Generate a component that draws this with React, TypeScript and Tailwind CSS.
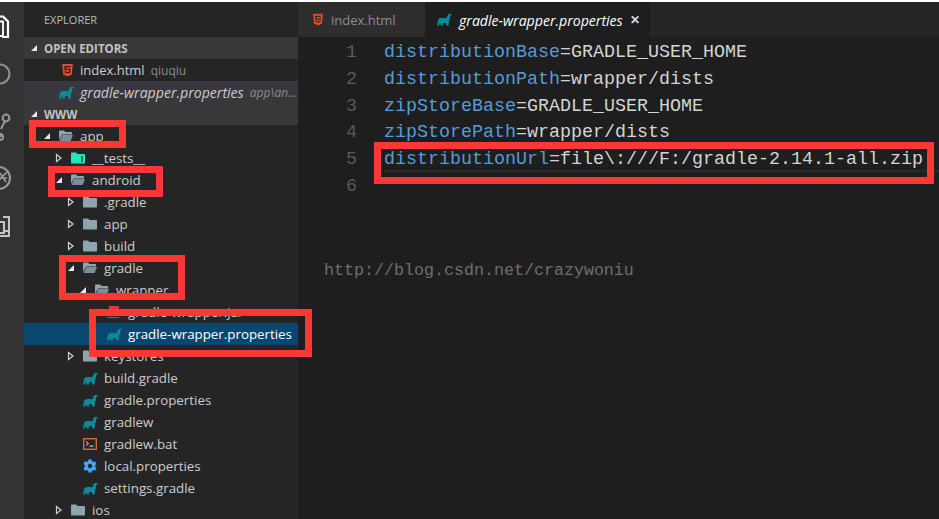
import React from "react";
import { FaCog, FaHtml5 } from "react-icons/fa";

const uiFont = "font-['Open_Sans','Liberation_Sans',sans-serif]";
const monoFont = "font-['Liberation_Mono',monospace]";

type Kind = "open" | "closed" | "tests" | "gradle" | "jar" | "bat" | "gear";

interface TreeRow {
  name: string;
  depth: number;
  kind: Kind;
  selected?: boolean;
}

const rows: TreeRow[] = [
  { name: "app", depth: 0, kind: "open" },
  { name: "__tests__", depth: 1, kind: "tests" },
  { name: "android", depth: 1, kind: "open" },
  { name: ".gradle", depth: 2, kind: "closed" },
  { name: "app", depth: 2, kind: "closed" },
  { name: "build", depth: 2, kind: "closed" },
  { name: "gradle", depth: 2, kind: "open" },
  { name: "wrapper", depth: 3, kind: "open" },
  { name: "gradle-wrapper.jar", depth: 4, kind: "jar" },
  { name: "gradle-wrapper.properties", depth: 4, kind: "gradle", selected: true },
  { name: "keystores", depth: 2, kind: "closed" },
  { name: "build.gradle", depth: 2, kind: "gradle" },
  { name: "gradle.properties", depth: 2, kind: "gradle" },
  { name: "gradlew", depth: 2, kind: "gradle" },
  { name: "gradlew.bat", depth: 2, kind: "bat" },
  { name: "local.properties", depth: 2, kind: "gear" },
  { name: "settings.gradle", depth: 2, kind: "gradle" },
  { name: "ios", depth: 1, kind: "closed" },
];

const code = [
  ["distributionBase", "=GRADLE_USER_HOME"],
  ["distributionPath", "=wrapper/dists"],
  ["zipStoreBase", "=GRADLE_USER_HOME"],
  ["zipStorePath", "=wrapper/dists"],
  ["distributionUrl", "=file\\:///F:/gradle-2.14.1-all.zip"],
  ["", ""],
];

function Elephant() {
  return (
    <svg viewBox="0 0 15 13" className="w-[15px] h-[13px] shrink-0" fill="#0b8a9a">
      <path d="M0 12.5 L1 7 C1.5 5.5 3 5 5 5 C7 5 8 5.5 9.5 5 C10 3 11 1 12.5 .8 C13.5 .7 15 1 14.6 2.2 L13.3 2.6 C13 4.5 13 7 12 8.2 L11.6 12.5 L9.4 12.5 L9 10 L6 10 L5.8 12.5 L3.6 12.5 L3.4 10.4 L2.4 10.6 L2.2 12.5 Z" />
    </svg>
  );
}

function OpenFolder() {
  return (
    <svg viewBox="0 0 14 12" className="w-[14px] h-[12px]">
      <path d="M0 1.5 C0 .8 .5 .5 1 .5 H5 L6.5 2 H12 C12.6 2 13 2.4 13 3 V4.5 H3 L0 10 Z" fill="#90a4ae" />
      <path d="M3.2 5 H14 L11.6 11 H.4 Z" fill="#78909c" />
    </svg>
  );
}

function ClosedFolder() {
  return (
    <svg viewBox="0 0 14 12" className="w-[14px] h-[12px]">
      <path d="M0 1.5 C0 .8 .5 .5 1 .5 H5 L6.5 2 H13 C13.6 2 14 2.4 14 3 V10.5 C14 11.2 13.6 11.5 13 11.5 H1 C.4 11.5 0 11.2 0 10.5 Z" fill="#90a4ae" />
    </svg>
  );
}

function TestsFolder() {
  return (
    <svg viewBox="0 0 14 12" className="w-[14px] h-[12px]">
      <path d="M0 1.5 C0 .8 .5 .5 1 .5 H5 L6.5 2 H13 C13.6 2 14 2.4 14 3 V10.5 C14 11.2 13.6 11.5 13 11.5 H1 C.4 11.5 0 11.2 0 10.5 Z" fill="#1de9b6" />
      <rect x="10" y="4" width="2" height="6" fill="#0b7a63" />
    </svg>
  );
}

function BatIcon() {
  return (
    <svg viewBox="0 0 14 12" className="w-[14px] h-[12px]" fill="none">
      <rect x=".7" y=".7" width="12.6" height="10.6" stroke="#e0623a" strokeWidth="1.4" />
      <path d="M3 3.5 L5.5 5.5 L3 7.5" stroke="#e8e8e8" strokeWidth="1" />
      <path d="M6.5 8 H10.5" stroke="#e8e8e8" strokeWidth="1" />
    </svg>
  );
}

function JarIcon() {
  return (
    <svg viewBox="0 0 14 13" className="w-[14px] h-[13px]">
      <rect x="2" y="0" width="10" height="4" fill="#e53935" />
      <rect x="0" y="11" width="12" height="1" fill="#e53935" />
    </svg>
  );
}

function RowIcon({ kind }: { kind: Kind }) {
  if (kind === "open") return <OpenFolder />;
  if (kind === "closed") return <ClosedFolder />;
  if (kind === "tests") return <TestsFolder />;
  if (kind === "gradle") return <Elephant />;
  if (kind === "jar") return <JarIcon />;
  if (kind === "bat") return <BatIcon />;
  return <FaCog className="w-[14px] h-[14px] text-[#42a5f5]" />;
}

function Arrow({ open }: { open: boolean }) {
  return open ? (
    <svg viewBox="0 0 8 8" className="w-[8px] h-[8px]">
      <path d="M7 1 V7 H1 Z" fill="#e8e8e8" />
    </svg>
  ) : (
    <svg viewBox="0 0 8 10" className="w-[8px] h-[10px]" fill="none">
      <path d="M1.5 1.5 L6 5 L1.5 8.5 Z" stroke="#d0d0d0" strokeWidth="1.2" />
    </svg>
  );
}

function SectionHeader({ label }: { label: string }) {
  return (
    <div className="h-[22px] flex items-center bg-[#383838] pl-[6px]">
      <Arrow open />
      <span className="ml-[6px] pt-[2px] text-[11.5px] font-bold text-[#c2c2c2]">{label}</span>
    </div>
  );
}

function ActivityBar() {
  return (
    <div className="w-[24px] shrink-0 bg-[#333333] overflow-hidden pt-[13px]">
      <svg viewBox="0 0 10 24" className="w-[10px] h-[24px]" fill="none" stroke="#ffffff" strokeWidth="2.2">
        <path d="M-4 1.5 H3 L8 6.5 V22 H2" />
        <path d="M-3 6.5 H3 V21 H-3" strokeWidth="1.8" />
      </svg>
      <svg viewBox="0 0 11 22" className="w-[11px] h-[22px] mt-[24px]" fill="none" stroke="#8e8e8e" strokeWidth="2.2">
        <circle cx="0" cy="11" r="9.5" />
      </svg>
      <svg viewBox="0 0 11 28" className="w-[11px] h-[28px] mt-[28px]" fill="none" stroke="#9a9a9a" strokeWidth="2">
        <circle cx="6" cy="5" r="3.4" />
        <path d="M5 8 L1 16 M-1 20 L1 24" />
        <circle cx="0" cy="24" r="3" />
      </svg>
      <svg viewBox="0 0 11 26" className="w-[11px] h-[26px] mt-[24px]" fill="none" stroke="#9a9a9a" strokeWidth="2">
        <circle cx="-1" cy="13" r="11" />
        <path d="M0 8 L6 17 M7 7 L-1 15 M0 13 H7" strokeWidth="1.6" />
      </svg>
      <svg viewBox="0 0 10 24" className="w-[10px] h-[24px] mt-[25px]" fill="none" stroke="#c4c4c4" strokeWidth="2.2">
        <path d="M3 1 H9 V7 M9 7 V15 H5 M-2 6 H4 V17 H-2 M-2 20 H9 V15" />
      </svg>
    </div>
  );
}

function Sidebar() {
  return (
    <div className={`w-[274px] shrink-0 bg-[#252526] overflow-hidden text-[13.33px] text-[#cccccc] ${uiFont}`}>
      <div className="h-[35px] flex items-center pl-[20px] pt-[2px] text-[11px] text-[#bbbbbb]">EXPLORER</div>
      <SectionHeader label="OPEN EDITORS" />
      <div className="h-[22px] flex items-center pl-[37px]">
        <FaHtml5 className="w-[13px] h-[14px] text-[#e44d26]" />
        <span className="ml-[6px] pt-[2px] text-[13px]">index.html</span>
        <span className="ml-[6px] pt-[2px] text-[12px] text-[#8a8a8a]">qiuqiu</span>
      </div>
      <div className="h-[22px] flex items-center pl-[35px] bg-[#37373d] whitespace-nowrap overflow-hidden">
        <Elephant />
        <span className="ml-[6px] pt-[2px] italic text-[14.1px]">gradle-wrapper.properties</span>
        <span className="ml-[6px] pt-[2px] text-[12px] italic text-[#8a8a8a]">app\an...</span>
      </div>
      <SectionHeader label="WWW" />
      {rows.map((r, i) => {
        const isFolder = r.kind === "open" || r.kind === "closed" || r.kind === "tests";
        return (
          <div
            key={i}
            className={`h-[22px] flex items-center whitespace-nowrap ${r.selected ? "bg-[#094771] text-white" : ""}`}
            style={{ paddingLeft: 19 + r.depth * 12 }}
          >
            <span className="w-[16px] flex justify-start">{isFolder && <Arrow open={r.kind === "open"} />}</span>
            <span className="w-[14px] flex justify-center">
              <RowIcon kind={r.kind} />
            </span>
            <span className="ml-[7px] pt-[2px]">{r.name}</span>
          </div>
        );
      })}
    </div>
  );
}

function Editor() {
  return (
    <div className="flex-1 min-w-0 bg-[#1e1e1e] flex flex-col">
      <div className={`h-[35px] shrink-0 flex bg-[#252526] text-[13px] ${uiFont}`}>
        <div className="w-[127px] bg-[#2d2d2d] flex items-center pl-[14px] text-[#8e8e8e]">
          <FaHtml5 className="w-[12px] h-[13px] text-[#e44d26]" />
          <span className="ml-[7px] pt-[2px]">index.html</span>
        </div>
        <div className="w-[225px] bg-[#1e1e1e] flex items-center pl-[12px] text-white">
          <Elephant />
          <span className="ml-[7px] pt-[2px] italic text-[14.1px] whitespace-nowrap">gradle-wrapper.properties</span>
          <span className="ml-[7px] text-[12px] font-bold text-[#dddddd]">✕</span>
        </div>
      </div>
      <div className={`flex-1 flex pt-[1px] text-[18.33px] leading-[26.8px] ${monoFont}`}>
        <div className="w-[59px] shrink-0 text-right text-[#5a5a5a]">
          {code.map((_, i) => (
            <div key={i} className="h-[26.8px]">
              <span className="relative top-[2px]">{i + 1}</span>
            </div>
          ))}
        </div>
        <div className="ml-[27px] flex-1 whitespace-nowrap">
          {code.map(([key, val], i) => (
            <div key={i} className={`h-[26.8px] ${i === 4 ? "shadow-[inset_0_-2px_0_#282828]" : ""}`}>
              <span className="relative top-[2px]">
                <span className="text-[#569cd6]">{key}</span>
                <span className="text-[#d4d4d4]">{val}</span>
              </span>
            </div>
          ))}
        </div>
      </div>
    </div>
  );
}

const marks = [
  "left-[29px] top-[120px] w-[97px] h-[28px] border-[7px]",
  "left-[48px] top-[166px] w-[115px] h-[31px] border-[7px]",
  "left-[59px] top-[255px] w-[126px] h-[45px] border-[7px]",
  "left-[89px] top-[309px] w-[223px] h-[48px] border-[7px]",
  "left-[374px] top-[142px] w-[560px] h-[42px] border-[7px]",
];

export default function App() {
  return (
    <div className="relative w-[939px] h-[519px] overflow-hidden bg-white pt-[2px]">
      <div className="flex h-[517px]">
        <ActivityBar />
        <Sidebar />
        <Editor />
      </div>
      {marks.map((m, i) => (
        <div key={i} className={`absolute border-[#fb3737] ${m}`} />
      ))}
      <div className="absolute left-[324px] top-[261px] text-[16.67px] leading-[20px] text-[#6e6e6e] font-['Liberation_Mono',monospace]">
        http://blog.csdn.net/crazywoniu
      </div>
    </div>
  );
}
